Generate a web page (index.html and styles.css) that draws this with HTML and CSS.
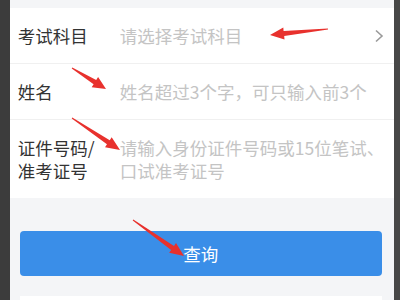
FILE: index.html
```html
<!DOCTYPE html>
<html lang="zh-CN">
<head>
    <meta charset="UTF-8">
    <meta name="viewport" content="width=device-width, initial-scale=1.0">
    <title>成绩查询</title>
    <link rel="stylesheet" href="styles.css">
</head>
<body>
    <div class="frame">
        <!-- Dark edge on the left of the recording -->
        <div class="edge edge-left"></div>

        <div class="page">
            <!-- Query form -->
            <div class="card">
                <div class="row">
                    <div class="label">考试科目</div>
                    <div class="value">请选择考试科目</div>
                    <svg class="chevron" width="10" height="14" viewBox="0 0 10 14">
                        <polyline points="2,1.5 8,7 2,12.5" fill="none" stroke="#9a9a9a" stroke-width="1.6"/>
                    </svg>
                </div>
                <div class="row">
                    <div class="label">姓名</div>
                    <div class="value">姓名超过3个字，可只输入前3个</div>
                </div>
                <div class="row">
                    <div class="label">证件号码/<br>准考证号</div>
                    <div class="value">请输入身份证件号码或15位笔试、<br>口试准考证号</div>
                </div>
            </div>

            <button class="submit">查询</button>

            <div class="panel"></div>
        </div>

        <div class="edge edge-right"></div>

        <!-- Red hint arrows drawn over the form -->
        <svg class="arrows" width="400" height="300" viewBox="0 0 400 300">
            <polygon points="327.95,28.5 283.6,31.1 283.3,27.6 270,35 284.5,39.6 284.2,36.1 328.05,29.5"/>
            <polygon points="71.74,68.43 93.6,84.3 91.7,87.3 106,89 98.1,77.1 96.2,80.1 72.26,67.57"/>
            <polygon points="71.72,118.42 106.96,144.31 105.02,147.22 120,150 111.68,137.24 109.74,140.15 72.28,117.58"/>
            <polygon points="132.71,220.41 171.12,249.96 169.1,252.82 184,256 176.02,243.02 174,245.88 133.29,219.59"/>
        </svg>
    </div>
</body>
</html>
```

FILE: styles.css
```css
/* Page basics */
body {
    margin: 0;
    font-family: "Noto Sans CJK SC", "Noto Sans", sans-serif;
    background-color: #3c3c3c;
}

/* Whole screenshot area */
.frame {
    position: relative;
    display: flex;
    width: 400px;
    height: 300px;
    overflow: hidden;
}

/* Dark strips at both sides */
.edge {
    background-color: #3c3c3c;
}

.edge-left {
    width: 10px;
}

.edge-right {
    width: 6px;
    background-color: #474747;
}

/* Gray app background */
.page {
    flex: 1;
    padding-top: 8px;
    background-color: #f4f5f7;
}

/* White form card */
.card {
    background-color: #ffffff;
}

.row {
    display: flex;
    align-items: center;
    padding: 16px 10px 16px 8px;
    margin-left: 0;
    border-bottom: 1px solid #f0f0f0;
    line-height: 23px;
    font-size: 17.5px;
}

.row:last-child {
    border-bottom: none;
}

.label {
    width: 102px;
    color: #333333;
    flex-shrink: 0;
}

.value {
    flex: 1;
    color: #c4c4c4;
    white-space: nowrap;
}

.chevron {
    flex-shrink: 0;
}

/* Blue query button */
.submit {
    display: block;
    width: 362px;
    height: 45px;
    margin: 33px 0 0 10px;
    border: none;
    border-radius: 4px;
    background-color: #3a8ee8;
    color: #ffffff;
    font-family: inherit;
    font-size: 17.5px;
}

/* Start of the next white block */
.panel {
    height: 40px;
    margin: 20px 12px 0 10px;
    background-color: #ffffff;
}

/* Overlay arrows */
.arrows {
    position: absolute;
    left: 0;
    top: 0;
    fill: #e8312d;
}
```
